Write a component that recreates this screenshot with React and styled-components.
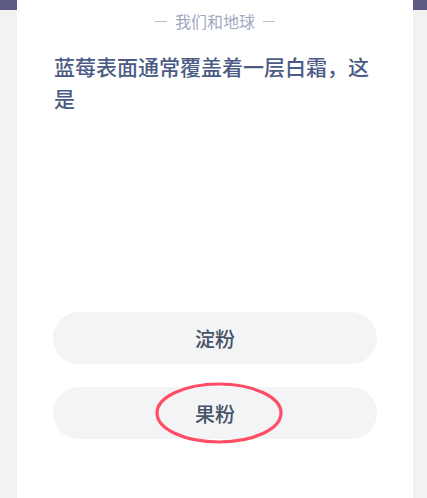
import styled, { createGlobalStyle } from 'styled-components';

const GlobalStyle = createGlobalStyle`
  html, body {
    margin: 0;
    padding: 0;
    background: #f2f2f3;
    font-family: "Noto Sans CJK SC", "Noto Sans", sans-serif;
  }
`;

const options = [
  { id: 1, label: '淀粉', marked: false },
  { id: 2, label: '果粉', marked: true },
];

const App = () => {
  return (
    <>
      <GlobalStyle />
      <Page>
        <SideStrip $width={17} />
        <Card>
          <Category>
            <Dash />
            <span>我们和地球</span>
            <Dash />
          </Category>
          <Question>蓝莓表面通常覆盖着一层白霜，这是</Question>
          <Options>
            {options.map(item => (
              <Option key={item.id}>
                {item.label}
                {item.marked && (
                  <Circle width="130" height="64" viewBox="0 0 130 64">
                    <ellipse cx="65" cy="32" rx="62" ry="29" fill="none" stroke="#ff4d66" strokeWidth="3.2" />
                  </Circle>
                )}
              </Option>
            ))}
          </Options>
        </Card>
        <SideStrip $width={14} />
      </Page>
    </>
  );
};

export default App;

const Page = styled.div`
  display: flex;
  min-height: 100vh;
  width: 427px;
`;

const SideStrip = styled.div`
  width: ${p => p.$width}px;
  flex-shrink: 0;
  background: linear-gradient(#f2f2f3, #f2f2f3) 0 10px / 100% 100% no-repeat, #5b5b86;
`;

const Card = styled.div`
  width: 396px;
  background: #ffffff;
  padding: 10px 36px 0 36px;
  box-sizing: border-box;
  display: flex;
  flex-direction: column;
`;

const Category = styled.div`
  display: flex;
  justify-content: center;
  align-items: center;
  gap: 8px;
  height: 22px;
  font-size: 16px;
  color: #a1a9c1;
`;

const Dash = styled.i`
  display: block;
  width: 12px;
  height: 1px;
  background: #b8bfd2;
`;

const Question = styled.div`
  margin-top: 18px;
  height: 262px;
  padding-left: 1px;
  font-size: 21px;
  line-height: 32px;
  font-weight: 500;
  color: #4b5b85;
`;

const Options = styled.div`
  display: flex;
  flex-direction: column;
  gap: 23px;
`;

const Option = styled.div`
  position: relative;
  height: 52px;
  border-radius: 26px;
  background: #f3f4f6;
  display: flex;
  justify-content: center;
  align-items: center;
  font-size: 20px;
  font-weight: 500;
  color: #475366;
`;

const Circle = styled.svg`
  position: absolute;
  left: 50%;
  top: 50%;
  transform: translate(-61px, -32px);
  pointer-events: none;
`;
